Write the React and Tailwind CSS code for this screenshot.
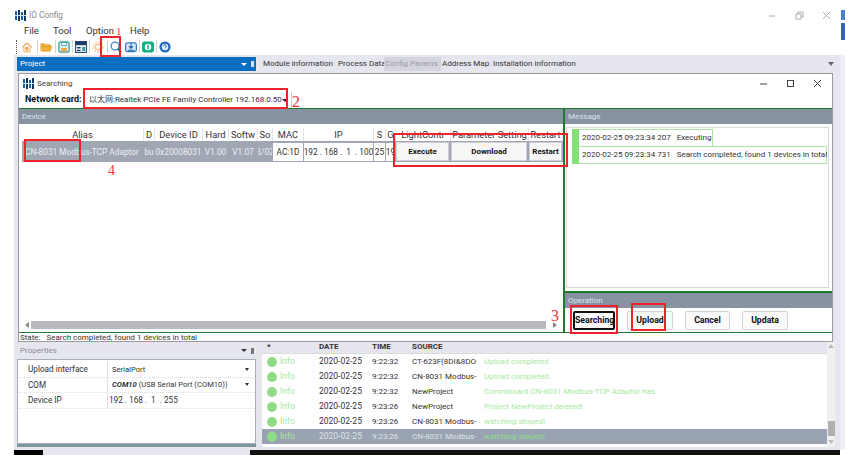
import React from "react";

const font = "font-['Roboto','Liberation_Sans',sans-serif]";

function Logo() {
  return (
    <svg width="11" height="11" viewBox="0 0 11 11" className="shrink-0">
      <rect x="0" y="1" width="2" height="9" fill="#1f5f9e" />
      <rect x="3" y="0" width="2" height="11" fill="#14365e" />
      <rect x="6" y="2" width="2" height="8" fill="#1f5f9e" />
      <rect x="9" y="0" width="2" height="11" fill="#14365e" />
      <rect x="0" y="5" width="11" height="1" fill="#cfe0f0" />
    </svg>
  );
}

function Slot({ w, children, sep }) {
  return (
    <div style={{ width: w }} className={"shrink-0 h-[13px] flex items-center pl-[2px] " + (sep ? "border-l border-[#cfd8cf]" : "")}>
      {children}
    </div>
  );
}

function ToolIcon({ children }) {
  return (
    <svg width="12" height="12" viewBox="0 0 13 13" className="shrink-0">
      {children}
    </svg>
  );
}

function Toolbar() {
  return (
    <div className="h-[17px] pl-[16px] flex items-center shrink-0">
      <div className="h-[14px] w-[3px] border-l border-dotted border-[#555]" />
      <Slot w={18}>
        <ToolIcon>
          <path d="M1.500 7L6.500 2l5 5" fill="none" stroke="#eeb060" strokeWidth="1.400" />
          <path d="M3 6.500v5.500h7V6.500" fill="#f8e2bd" stroke="#f0c283" />
          <path d="M6.500 11V7M4.800 8.500l1.700-1.700 1.700 1.700" stroke="#d9822b" fill="none" />
        </ToolIcon>
      </Slot>
      <Slot w={18} sep>
        <ToolIcon>
          <path d="M1 11V3h4l1 1h5v2H4l-2 5h9l2-5H4" fill="#f2b23c" stroke="#e09a2a" strokeWidth="0.800" />
        </ToolIcon>
      </Slot>
      <Slot w={17} sep>
        <ToolIcon>
          <rect x="1" y="1" width="11" height="11" rx="1.500" fill="#d9f1ee" stroke="#2a9d9a" strokeWidth="1.300" />
          <rect x="4" y="1.500" width="5" height="3.500" fill="#fff" stroke="#2a9d9a" strokeWidth="0.800" />
          <rect x="3.500" y="7.500" width="6" height="4" fill="#f0a848" />
        </ToolIcon>
      </Slot>
      <Slot w={17} sep>
        <ToolIcon>
          <rect x="0.500" y="0.500" width="12" height="12" fill="#e8eef5" stroke="#1d3e66" />
          <rect x="0.500" y="0.500" width="12" height="4" fill="#1d3e66" />
          <rect x="2" y="6.500" width="4" height="1.500" fill="#1d3e66" />
          <rect x="2" y="9.500" width="4" height="1.500" fill="#1d3e66" />
          <rect x="8" y="6.500" width="3" height="4.500" fill="#2a9d9a" />
        </ToolIcon>
      </Slot>
      <Slot w={18} sep>
        <ToolIcon>
          <circle cx="6.500" cy="6.500" r="3" fill="none" stroke="#eec68a" strokeWidth="1.500" />
          <circle cx="6.500" cy="6.500" r="5.300" fill="none" stroke="#f0d3a5" strokeWidth="1.800" strokeDasharray="2 1.500" />
        </ToolIcon>
      </Slot>
      <Slot w={16} sep>
        <ToolIcon>
          <circle cx="5.500" cy="5.500" r="4.300" fill="none" stroke="#2f8fd8" strokeWidth="1.400" />
          <path d="M8.500 8.500l3.500 3.500" stroke="#1d5fa8" strokeWidth="2" />
        </ToolIcon>
      </Slot>
      <Slot w={16}>
        <ToolIcon>
          <rect x="0.700" y="2" width="11.600" height="9.500" rx="2" fill="#d6e8f7" stroke="#2b7cc4" strokeWidth="1.300" />
          <path d="M6.500 2.500v5M4.300 5.500l2.200 2.500 2.200-2.500M3 10h7" stroke="#1f5f9e" fill="none" strokeWidth="1.200" />
        </ToolIcon>
      </Slot>
      <Slot w={17} sep>
        <ToolIcon>
          <rect x="0" y="0.500" width="13" height="12" rx="3" fill="#10b07f" />
          <circle cx="6.500" cy="6.500" r="3.500" fill="#fff" />
          <rect x="5.700" y="4" width="1.600" height="5" fill="#10b07f" />
        </ToolIcon>
      </Slot>
      <Slot w={17} sep>
        <ToolIcon>
          <circle cx="6.500" cy="6.500" r="6" fill="#1f68c0" />
          <circle cx="6.500" cy="6.500" r="3.500" fill="#e8f1fb" />
          <path d="M5 5.500a1.500 1.500 0 1 1 2 1.400v1" stroke="#1f68c0" fill="none" />
        </ToolIcon>
      </Slot>
    </div>
  );
}

function PanelHeader({ children }) {
  return (
    <div className="h-[15px] shrink-0 bg-[#8793a3] text-[#dfe4ea] text-[8px] leading-[15px] pl-[3px]">
      {children}
    </div>
  );
}

function Head({ w, children }) {
  return (
    <div style={{ width: w }} className="shrink-0 overflow-hidden whitespace-nowrap flex justify-center text-[#333] text-[9.300px] leading-[13px] border-r border-[#e4e4e4]">
      {children}
    </div>
  );
}

function Cell({ w, children, light }) {
  return (
    <div
      style={{ width: w }}
      className={
        "shrink-0 overflow-hidden whitespace-pre flex justify-center text-[8.300px] leading-[18px] h-[18px] mr-px " +
        (light ? "bg-white text-[#333]" : "text-[#eceef2]")
      }
    >
      {children}
    </div>
  );
}

function RowButton({ w, children }) {
  return (
    <div style={{ width: w }} className="shrink-0 h-[19px] mr-[2px] bg-[#f6f6f6] border border-[#cfcfd4] text-center font-bold text-[#111] text-[8px] leading-[17px]">
      {children}
    </div>
  );
}

function DeviceTable() {
  const cols = [
    [122, "Alias"], [11, "D"], [48, "Device ID"], [26, "Hard"], [29, "Softw"], [15, "So"],
    [31, "MAC"], [70, "IP"], [12, "S"], [10, "G"], [55, "LightContr"], [78, "Parameter Setting"], [34, "Restart"],
  ];
  return (
    <div className="pt-[4px] pl-[3px]">
      <div className="flex h-[13px]">
        {cols.map(([w, t]) => (
          <Head key={t} w={w}>{t}</Head>
        ))}
      </div>
      <div className="flex h-[21px] bg-[#a0a6b4] items-center w-[541px]">
        <div className="w-[121px] shrink-0 mr-px whitespace-nowrap text-[8.300px] leading-[18px] pl-[3px] text-[#eceef2]">CN-8031 Modbus-TCP Adaptor</div>
        <Cell w={10}>bu</Cell>
        <Cell w={47}>0x20008031</Cell>
        <Cell w={25}>V1.00</Cell>
        <Cell w={28}>V1.07</Cell>
        <Cell w={14}>3/02</Cell>
        <Cell w={30} light>AC:1D</Cell>
        <Cell w={69} light>192 . 168 .  1  . 100</Cell>
        <Cell w={11} light>25</Cell>
        <Cell w={9} light>19</Cell>
        <div className="w-[1px]" />
        <RowButton w={53}>Execute</RowButton>
        <RowButton w={76}>Download</RowButton>
        <RowButton w={33}>Restart</RowButton>
      </div>
    </div>
  );
}

function OpButton({ children, w, active }) {
  return (
    <div
      style={{ width: w }}
      className={
        "h-[19px] rounded-[2px] text-center font-bold text-[#111] text-[8.700px] bg-[#fafafa] " +
        (active ? "border-2 border-[#111] leading-[15px]" : "border border-[#d4d4d8] leading-[17px]")
      }
    >
      {children}
    </div>
  );
}

function MessageItem({ children, className = "" }) {
  return (
    <div className={"h-[18px] border border-[#a8e8a0] pl-[9px] text-[8px] leading-[16px] text-[#333] whitespace-pre " + className}>
      {children}
    </div>
  );
}

function Dialog() {
  return (
    <div className="h-[269px] w-[815px] ml-[4px] bg-white border border-[#9a9aa0] flex flex-col shrink-0">
      <div className="h-[18px] flex items-center pl-[4px] shrink-0 pt-[1px]">
        <Logo />
        <span className="ml-[3px] text-[8px] text-[#444]">Searching</span>
        <div className="ml-auto flex items-center text-[#333]">
          <svg width="9" height="9" viewBox="0 0 9 9"><path d="M1 5h7" stroke="#444" /></svg>
          <svg width="9" height="9" viewBox="0 0 9 9" className="ml-[18px]"><rect x="1.500" y="1.500" width="6" height="6" fill="none" stroke="#444" /></svg>
          <svg width="9" height="9" viewBox="0 0 9 9" className="ml-[18px] mr-[10px]"><path d="M1 1l7 7M8 1l-7 7" stroke="#444" /></svg>
        </div>
      </div>
      <div className="h-[16px] flex items-center pl-[6px] shrink-0">
        <span className="font-bold text-[9px] text-[#111] w-[58px] whitespace-nowrap">Network card:</span>
        <div className="w-[209px] h-[16px] border-r border-[#ccc] flex items-center pl-[6px] text-[8px] text-[#333] whitespace-nowrap font-['Roboto','Noto_Sans_CJK_SC',sans-serif]">
          以太网:Realtek PCIe FE Family Controller 192.168.0.50
          <span className="ml-auto mr-[6px] w-0 h-0 border-x-[3px] border-x-transparent border-t-[3px] border-t-[#222]" />
        </div>
      </div>
      <div className="flex-1 flex border-t border-[#1f7a2e] min-h-0">
        <div className="w-[546px] shrink-0 flex flex-col border-r-2 border-[#1f7a2e]">
          <PanelHeader>Device</PanelHeader>
          <DeviceTable />
          <div className="flex-1" />
          <div className="h-[9px] ml-[6px] mr-[6px] mb-[3px] flex items-center">
            <span className="w-0 h-0 border-y-[3px] border-y-transparent border-r-[4px] border-r-[#888]" />
            <div className="flex-1 h-[8px] bg-[#b9b9bd] ml-[2px] mr-[7px]" />
            <span className="w-0 h-0 border-y-[3px] border-y-transparent border-l-[4px] border-l-[#888]" />
          </div>
        </div>
        <div className="flex-1 flex flex-col min-w-0">
          <PanelHeader>Message</PanelHeader>
          <div className="flex-1 ml-[1px] mr-[3px] mt-[3px] border border-[#d8d8dc] pl-[5px] pt-px relative">
            <div className="absolute left-[5px] top-px w-[7px] h-[35px] bg-[#86e07a]" />
            <MessageItem className="w-[141px]">2020-02-25 09:23:34 207   Executing</MessageItem>
            <MessageItem className="w-[255px] -mt-px">2020-02-25 09:23:34 731   Search completed, found 1 devices in total</MessageItem>
          </div>
          <div className="h-[41px] border-t-2 border-[#1f7a2e] mt-[3px] flex flex-col shrink-0">
            <PanelHeader>Operation</PanelHeader>
            <div className="flex pl-[8px] pt-[3px] gap-[12px]">
              <OpButton w={42} active>Searching</OpButton>
              <OpButton w={46}>Upload</OpButton>
              <OpButton w={45}>Cancel</OpButton>
              <OpButton w={46}>Updata</OpButton>
            </div>
          </div>
        </div>
      </div>
      <div className="h-[9px] border-t border-[#1f7a2e] text-[8px] leading-[9px] text-[#333] whitespace-pre pl-px shrink-0 bg-white">
        State:   Search completed, found 1 devices in total
      </div>
    </div>
  );
}

function PropRow({ label, children, arrow }) {
  return (
    <div className="flex h-[15.500px] text-[8.200px] leading-[15px] text-[#333] border-b border-dotted border-[#ddd]">
      <div className="w-[90px] pl-[10px] border-r border-[#ddd] shrink-0">{label}</div>
      <div className="flex-1 pl-[4px] flex items-center whitespace-pre min-w-0">
        {children}
        {arrow && <span className="ml-auto mr-[6px] w-0 h-0 border-x-[2.500px] border-x-transparent border-t-[3px] border-t-[#333]" />}
      </div>
    </div>
  );
}

function Properties() {
  return (
    <div className="w-[239px] shrink-0 flex flex-col">
      <div className="h-[17px] flex items-center pl-[3px] text-[8px] text-[#8c8c94] shrink-0">
        Properties
        <span className="ml-auto mr-[2px] flex items-center gap-[4px]">
          <span className="w-0 h-0 border-x-[3px] border-x-transparent border-t-[3px] border-t-[#333]" />
          <span className="w-[3px] h-[6px] bg-[#777]" />
        </span>
      </div>
      <div className="flex-1 bg-white border border-[#a9aeb8] pt-[2px]">
        <PropRow label="Upload interface" arrow><span className="text-[7.600px]">SerialPort</span></PropRow>
        <PropRow label="COM" arrow>
          <span className="text-[7.600px]"><b className="italic">COM10</b> (USB Serial Port (COM10))</span>
        </PropRow>
        <PropRow label="Device IP">
          <span className="-ml-[3px]">192 . 168 .  1  . 255</span>
        </PropRow>
      </div>
      <div className="h-[3px] bg-[#7f97a3] shrink-0" />
    </div>
  );
}

const logs = [
  ["9:22:32", "CT-623F(8DI&8DO", "Upload completed"],
  ["9:22:32", "CN-8031 Modbus-", "Upload completed"],
  ["9:22:32", "NewProject", "Commboard CN-8031 Modbus-TCP Adaptor has"],
  ["9:23:26", "NewProject", "Project NewProject deleted!"],
  ["9:23:26", "CN-8031 Modbus-", "watching stoped!"],
  ["9:23:26", "CN-8031 Modbus-", "watching stoped!"],
];

function LogTable() {
  return (
    <div className="flex-1 ml-[6px] flex min-w-0">
      <div className="flex-1 min-w-0 flex flex-col">
        <div className="h-[12px] shrink-0 flex font-bold text-[#333] text-[8px] leading-[10px] border-b border-[#dcdcdc]">
          <div className="w-[57px] pl-[5px]">*</div>
          <div className="w-[53px]">DATE</div>
          <div className="w-[40px]">TIME</div>
          <div>SOURCE</div>
        </div>
        <div className="flex-1 bg-white">
          {logs.map((r, i) => (
            <div
              key={i}
              className={"flex h-[15px] items-center text-[8px] whitespace-nowrap " + (i === 5 ? "bg-[#9aa3b2] text-[#dfe3e8]" : "text-[#333]")}
            >
              <span className="ml-[5px] w-[10px] h-[10px] rounded-full bg-[#8fdc86] shrink-0" />
              <span className="ml-[3px] w-[39px] text-[#a6e8a0] text-[8.500px] shrink-0">Info</span>
              <span className="w-[53px] text-[8.500px] shrink-0">2020-02-25</span>
              <span className="w-[40px] shrink-0">{r[0]}</span>
              <span className="w-[72px] shrink-0">{r[1]}</span>
              <span className={i === 5 ? "text-[#8fe087]" : "text-[#a6e8a0]"}>{r[2]}</span>
            </div>
          ))}
        </div>
      </div>
      <div className="w-[8px] bg-[#f0f0f2] flex flex-col items-center pt-[2px] pb-[3px] shrink-0">
        <span className="w-0 h-0 border-x-[3px] border-x-transparent border-b-[4px] border-b-[#bbb]" />
        <div className="flex-1" />
        <div className="w-[7px] h-[15px] bg-[#b0b0b0]" />
        <div className="h-[4px]" />
        <span className="w-0 h-0 border-x-[3px] border-x-transparent border-t-[4px] border-t-[#bbb]" />
      </div>
    </div>
  );
}

function Mark({ className }) {
  return <div className={"absolute border-2 border-[#f0232c] pointer-events-none " + className} />;
}

function Num({ className, children }) {
  return <span className={"absolute text-[#f0343c] leading-none font-['Liberation_Serif',serif] " + className}>{children}</span>;
}

export default function App() {
  return (
    <div className={"relative w-[857px] h-[459px] bg-white overflow-hidden flex flex-col " + font}>
      <div className="h-[24px] shrink-0 flex items-center pl-[15px] pt-[6px]">
        <Logo />
        <span className="ml-[3px] text-[8.300px] text-[#8a8a8a]">IO Config</span>
        <div className="ml-auto flex items-center mr-[26px]">
          <svg width="9" height="9" viewBox="0 0 9 9"><path d="M1 5h6" stroke="#aaa" /></svg>
          <svg width="9" height="9" viewBox="0 0 9 9" className="ml-[18px]"><path d="M1 3h5v5H1zM3 3V1h5v5H6" fill="none" stroke="#aaa" /></svg>
          <svg width="9" height="9" viewBox="0 0 9 9" className="ml-[18px]"><path d="M1 1l7 7M8 1l-7 7" stroke="#aaa" /></svg>
        </div>
      </div>
      <div className="h-[14px] shrink-0 flex pl-[24px] text-[9.500px] leading-[13px] text-[#333]">
        <span className="w-[29px]">File</span>
        <span className="w-[33px]">Tool</span>
        <span className="w-[44px]">Option</span>
        <span>Help</span>
      </div>
      <Toolbar />
      <div className="h-[395px] w-[831px] ml-[14px] shrink-0 bg-[#e6e6ee] border-r-[5px] border-[#eef0f5] flex flex-col pt-[2px] pl-[3px] pr-[5px]">
        <div className="h-[14px] flex shrink-0">
          <div className="w-[239px] bg-[#0a6fc2] text-white text-[8px] leading-[14px] pl-[3px] flex items-center">
            Project
            <span className="ml-auto mr-[2px] flex items-center gap-[4px]">
              <span className="w-0 h-0 border-x-[3px] border-x-transparent border-t-[3px] border-t-white" />
              <span className="w-[3px] h-[6px] bg-[#cfe3f5]" />
            </span>
          </div>
          <div className="flex-1 flex text-[8px] leading-[14px] text-[#333] pl-[6px] whitespace-nowrap">
            <span className="w-[75px] pl-px">Module information</span>
            <span className="w-[47px] pl-px">Process Data</span>
            <span className="w-[57px] pl-px bg-[#d4d4dc] text-[#9a9aa4]">Config Params</span>
            <span className="w-[51px] pl-px">Address Map</span>
            <span className="pl-px">Installation information</span>
            <span className="ml-auto mt-[5px] mr-[1px] w-0 h-0 border-x-[3px] border-x-transparent border-t-[4px] border-t-[#666]" />
          </div>
        </div>
        <div className="h-[2px] shrink-0" />
        <div className="-ml-[3px]"><Dialog /></div>
        <div className="flex flex-1 min-h-0 pb-[3px]">
          <Properties />
          <LogTable />
        </div>
      </div>
      <div className="h-[5px] ml-[14px] w-[826px] shrink-0 flex">
        <div className="w-[29px] bg-black" />
        <div className="w-[207px] bg-[#e6e6ee]" />
        <div className="flex-1 bg-[#111]" />
      </div>

      <div className="absolute left-[841px] top-[10px] w-[4px] h-[10px] bg-[#4a84d0]" />
      <div className="absolute left-[841px] top-[23px] w-[4px] h-[17px] bg-[#2f62b8]" />

      <Mark className="left-[100px] top-[36px] w-[21px] h-[21px]" />
      <Mark className="left-[83px] top-[88px] w-[205px] h-[21px]" />
      <Mark className="left-[570px] top-[305px] w-[48px] h-[29px]" />
      <Mark className="left-[631px] top-[303px] w-[35px] h-[28px]" />
      <Mark className="left-[24px] top-[139px] w-[57px] h-[23px]" />
      <Mark className="left-[393px] top-[133px] w-[175px] h-[34px]" />
      <Num className="left-[116px] top-[26px] text-[11px]">1</Num>
      <Num className="left-[292px] top-[94px] text-[16px]">2</Num>
      <Num className="left-[551px] top-[308px] text-[16px]">3</Num>
      <Num className="left-[108px] top-[164px] text-[14px]">4</Num>
    </div>
  );
}
